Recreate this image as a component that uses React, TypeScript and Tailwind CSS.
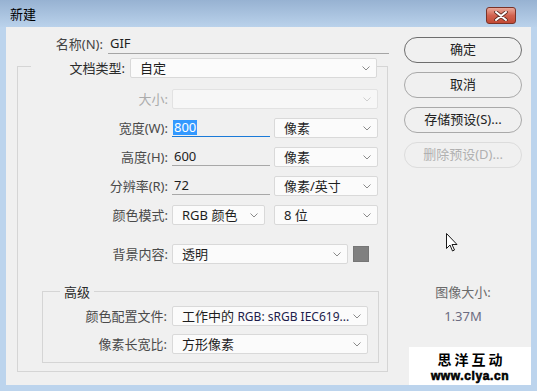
import type { ReactNode } from "react"

const font = { fontFamily: '"Noto Sans", "Noto Sans CJK SC", sans-serif' }

function Chevron({ disabled }: { disabled?: boolean }) {
  return (
    <svg width="8" height="5" viewBox="0 0 8 5" className="shrink-0">
      <path d="M0.5 0.5 L4 4 L7.5 0.5" fill="none" stroke={disabled ? "#cfcfcf" : "#8a8a8a"} strokeWidth="1" />
    </svg>
  )
}

function Combo({ w, children, disabled }: { w: string; children?: ReactNode; disabled?: boolean }) {
  return (
    <div
      className={`${w} h-[20px] shrink-0 flex items-center pl-[9px] pr-[6px] rounded-[2px] border ${
        disabled ? "border-[#e2e2e2] bg-[#f7f7f7]" : "border-[#d9d9d9] bg-[#fbfbfb]"
      }`}
    >
      <span className="flex-1 whitespace-nowrap overflow-hidden text-[13px] leading-[18px] text-[#1e1e1e]">{children}</span>
      <Chevron disabled={disabled} />
    </div>
  )
}

function Field({ children, focused }: { children: ReactNode; focused?: boolean }) {
  return (
    <div
      className={`w-[98px] h-[19px] self-start shrink-0 flex items-center pl-[2px] border-b ${
        focused ? "border-[#1a7ad8]" : "border-[#a8a8a8]"
      } text-[13px] leading-[16px] text-[#1e1e1e]`}
    >
      {children}
    </div>
  )
}

function Row({ label, children, mt, labelW, gap, disabled }: { label: string; children: ReactNode; mt: string; labelW: string; gap: string; disabled?: boolean }) {
  return (
    <div className={`flex h-[20px] items-center ${mt}`}>
      <div className={`${labelW} shrink-0 text-right text-[13px] leading-[18px] ${disabled ? "text-[#ababab]" : "text-[#4a4a4a]"}`}>{label}</div>
      <div className={`flex items-center h-[20px] ${gap}`}>{children}</div>
    </div>
  )
}

function Button({ children, primary, disabled }: { children: ReactNode; primary?: boolean; disabled?: boolean }) {
  return (
    <div
      className={`w-[118px] h-[26px] rounded-full border flex items-center justify-center text-[13px] ${
        disabled
          ? "border-[#dcdcdc] text-[#b0b0b0]"
          : primary
          ? "border-[#6e6e6e] text-[#222]"
          : "border-[#a9a9a9] text-[#222]"
      }`}
    >
      {children}
    </div>
  )
}

export default function App() {
  return (
    <div className="w-[537px] h-[391px] bg-[#bcd4ed] flex flex-col overflow-hidden" style={font}>
      {/* title bar */}
      <div className="h-[27px] shrink-0 flex items-start pl-[10px] pr-[21px] bg-gradient-to-b from-[#97b2d2] to-[#bad2eb]">
        <span className="mt-[5px] text-[13px] leading-[18px] text-black">新建</span>
        <div className="ml-auto mt-[7px] w-[30px] h-[17px] rounded-[3px] border border-[#7a3328] bg-gradient-to-b from-[#e9a99b] via-[#d2624f] to-[#c24a35] flex items-center justify-center">
          <svg width="14" height="10" viewBox="0 0 14 10">
            <path d="M2 1 L12 9 M12 1 L2 9" stroke="#5a2a22" strokeWidth="3.6" strokeLinecap="round" />
            <path d="M2 1 L12 9 M12 1 L2 9" stroke="#ffffff" strokeWidth="2" strokeLinecap="round" />
          </svg>
        </div>
      </div>

      {/* content */}
      <div className="mx-[6px] h-[358px] shrink-0 bg-[#f0f0f0] relative flex">
        <div className="w-[384px] shrink-0 pt-[7px] flex flex-col">
          <div className="flex h-[20px] items-center">
            <div className="ml-[42px] w-[55px] text-right text-[13px] leading-[18px] text-[#444]">名称(N):</div>
            <div className="ml-[5px] w-[281px] h-[20px] border-b border-[#a5a5a5] pl-[2px] text-[13px] leading-[18px] text-[#1e1e1e]">GIF</div>
          </div>

          <div className="ml-[11px] mt-[12px] w-[371px] border border-[#d5d5d5] pb-[8px]">
            <div className="ml-[13px] -mt-[9px] w-[346px] h-[20px] bg-[#f0f0f0] flex items-center">
              <div className="w-[94px] text-right text-[13px] leading-[18px] text-[#2a2a2a]">文档类型:</div>
              <div className="ml-[5px]">
                <Combo w="w-[247px]">自定</Combo>
              </div>
            </div>

            <Row label="大小:" mt="mt-[11px]" labelW="w-[150px]" gap="ml-[4px]" disabled>
              <Combo w="w-[206px]" disabled />
            </Row>
            <Row label="宽度(W):" mt="mt-[9px]" labelW="w-[150px]" gap="ml-[4px]">
              <Field focused>
                <span className="bg-[#3399ff] text-white px-[1px] -ml-[1px] leading-[15px]">800</span>
              </Field>
              <div className="ml-[4px]">
                <Combo w="w-[104px]">像素</Combo>
              </div>
            </Row>
            <Row label="高度(H):" mt="mt-[9px]" labelW="w-[150px]" gap="ml-[4px]">
              <Field>600</Field>
              <div className="ml-[4px]">
                <Combo w="w-[104px]">像素</Combo>
              </div>
            </Row>
            <Row label="分辨率(R):" mt="mt-[9px]" labelW="w-[150px]" gap="ml-[4px]">
              <Field>72</Field>
              <div className="ml-[4px]">
                <Combo w="w-[104px]">像素/英寸</Combo>
              </div>
            </Row>
            <Row label="颜色模式:" mt="mt-[9px]" labelW="w-[150px]" gap="ml-[4px]">
              <Combo w="w-[93px]">RGB 颜色</Combo>
              <div className="ml-[9px]">
                <Combo w="w-[104px]">8 位</Combo>
              </div>
            </Row>
            <Row label="背景内容:" mt="mt-[19px]" labelW="w-[150px]" gap="ml-[4px]">
              <Combo w="w-[176px]">透明</Combo>
              <div className="ml-[5px] w-[16px] h-[16px] bg-[#808080] border border-[#767676]" />
            </Row>

            <div className="ml-[24px] mt-[27px] w-[337px] border border-[#d5d5d5] pb-[8px]">
              <div className="-mt-[9px] h-[18px] flex">
                <span className="ml-[17px] px-[4px] bg-[#f0f0f0] text-[13px] leading-[18px] text-[#2a2a2a]">高级</span>
              </div>
              <Row label="颜色配置文件:" mt="mt-[5px]" labelW="w-[124px]" gap="ml-[5px]">
                <Combo w="w-[196px]">
                  工作中的 <span className="text-[12px] text-[#1c1c4a]">RGB: sRGB IEC619...</span>
                </Combo>
              </Row>
              <Row label="像素长宽比:" mt="mt-[8px]" labelW="w-[124px]" gap="ml-[5px]">
                <Combo w="w-[196px]">方形像素</Combo>
              </Row>
            </div>
          </div>
        </div>

        <div className="pl-[14px] pt-[10px] flex flex-col">
          <div className="flex flex-col gap-[9px]">
            <Button primary>确定</Button>
            <Button>取消</Button>
            <Button>存储预设(S)...</Button>
            <Button disabled>删除预设(D)...</Button>
          </div>
          <div className="w-[118px] mt-[116px] text-center text-[13px] leading-[16px] text-[#6a6a6a]">图像大小:</div>
          <div className="w-[118px] mt-[8px] text-center text-[13px] leading-[16px] text-[#6b6b80]">1.37M</div>
        </div>

        {/* mouse cursor */}
        <svg className="absolute left-[440px] top-[206px]" width="13" height="20" viewBox="0 0 13 20">
          <path d="M0.5 0.5 L0.5 15.5 L4 12 L6.5 18 L8.5 17 L6 11.5 L11 11.5 Z" fill="#ffffff" stroke="#1a1a1a" strokeWidth="1" strokeLinejoin="miter" />
        </svg>

        {/* watermark */}
        <div className="absolute right-0 bottom-0 w-[122px] h-[38px] bg-white flex flex-col items-center pt-[2px]">
          <div className="text-[14px] leading-[20px] font-bold tracking-[3px] pl-[3px] text-black" style={{ fontFamily: '"Noto Sans CJK SC", sans-serif' }}>
            思洋互动
          </div>
          <div className="text-[12px] leading-[14px] font-bold tracking-[0.6px] text-black" style={{ fontFamily: '"Liberation Sans", sans-serif', WebkitTextStroke: "0.6px #000" }}>
            www.ciya.cn
          </div>
        </div>
      </div>
    </div>
  )
}
